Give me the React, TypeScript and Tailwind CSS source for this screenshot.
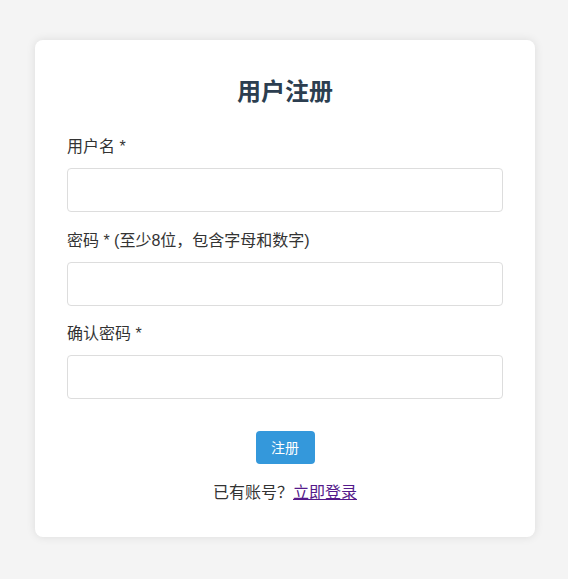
const fields = [
  { id: "username", label: "用户名 *", type: "text", gap: "" },
  { id: "password", label: "密码 * (至少8位，包含字母和数字)", type: "password", gap: "mt-[17px]" },
  { id: "confirm", label: "确认密码 *", type: "password", gap: "mt-4" },
];

export default function App() {
  return (
    <div className="min-h-[579px] bg-[#f4f4f4] pt-10 font-['Liberation_Sans','Noto_Sans_CJK_SC',sans-serif]">
      <div className="mx-auto w-[500px] translate-x-[1px] rounded-lg bg-white p-8 shadow-[0_0_10px_rgba(0,0,0,0.1)]">
        <h2 className="mt-1 text-center text-2xl leading-8 font-bold text-[#2c3e50]">用户注册</h2>

        <form className="mt-[27px]" onSubmit={(e) => e.preventDefault()}>
          {fields.map((f) => (
            <div key={f.id} className={f.gap}>
              <label htmlFor={f.id} className="mb-[9px] block text-base leading-6 text-[#333]">
                {f.label}
              </label>
              <input
                id={f.id}
                type={f.type}
                className="block h-11 w-full rounded border border-[#ddd] px-3 outline-none"
              />
            </div>
          ))}

          <div className="mt-8 flex justify-center">
            <button
              type="submit"
              className="h-[33px] w-[59px] rounded bg-[#3498db] text-sm text-white"
            >
              注册
            </button>
          </div>
        </form>

        <p className="mt-[17px] text-center text-base leading-6 text-[#333]">
          已有账号？
          <a href="#" className="text-[#551a8b] underline">
            立即登录
          </a>
        </p>
      </div>
    </div>
  );
}
